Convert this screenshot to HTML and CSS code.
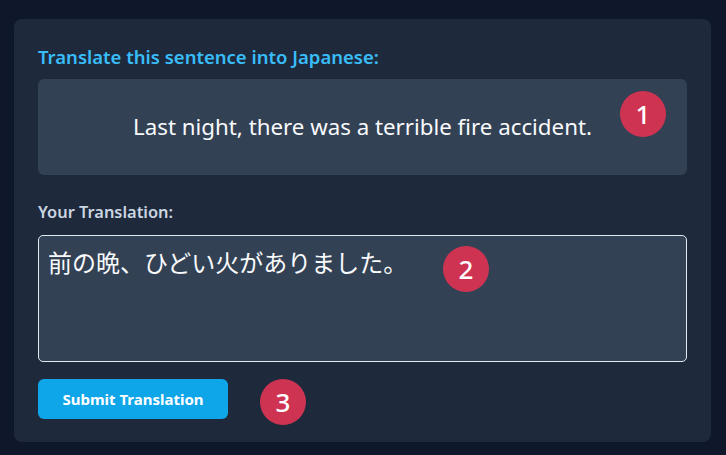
FILE: index.html
```html
<!DOCTYPE html>
<html lang="en">
<head>
<meta charset="utf-8">
<title>Translate</title>
<link rel="stylesheet" href="styles.css">
</head>
<body>
<main class="page">
  <section class="card">
    <h2 class="prompt-label">Translate this sentence into Japanese:</h2>
    <div class="sentence">Last night, there was a terrible fire accident.</div>
    <label class="answer-label" for="answer">Your Translation:</label>
    <textarea id="answer" class="answer">前の晩、ひどい火がありました。</textarea>
    <button class="submit" type="button">Submit Translation</button>
    <span class="badge badge-1">1</span>
    <span class="badge badge-2">2</span>
    <span class="badge badge-3">3</span>
  </section>
</main>
</body>
</html>
```

FILE: styles.css
```css
* { box-sizing: border-box; }
html, body {
  margin: 0;
  padding: 0;
  background: #0f172a;
  font-family: "Noto Sans", "Open Sans", "Noto Sans CJK JP", sans-serif;
}
.page {
  padding: 19px 15px 0 14px;
}
.card {
  position: relative;
  background: #1e293b;
  border-radius: 8px;
  padding: 24px 24px 23px 24px;
  display: flex;
  flex-direction: column;
  align-items: flex-start;
}
.prompt-label {
  margin: 0 0 8px 0;
  font-size: 18.5px;
  line-height: 28px;
  font-weight: 600;
  color: #38bdf8;
}
.sentence {
  align-self: stretch;
  background: #334155;
  border-radius: 6px;
  padding: 32px 24px;
  text-align: center;
  font-size: 22.3px;
  line-height: 32px;
  color: #f8fafc;
  margin-bottom: 25px;
}
.answer-label {
  font-size: 16.4px;
  line-height: 24px;
  font-weight: 600;
  color: #cbd5e1;
  margin-bottom: 11px;
}
.answer {
  align-self: stretch;
  height: 127px;
  background: #334155;
  border: 1px solid #e2e8f0;
  border-radius: 5px;
  padding: 10px 9px;
  font-family: "Noto Sans CJK JP", "Noto Sans", sans-serif;
  font-size: 24px;
  line-height: 32px;
  color: #f8fafc;
  resize: none;
  margin: 0 0 17px 0;
  outline: none;
}
.submit {
  width: 190px;
  height: 40px;
  border: none;
  border-radius: 6px;
  background: #0ea5e9;
  color: #ffffff;
  font-family: "Noto Sans", "Open Sans", sans-serif;
  font-size: 15px;
  font-weight: 700;
  padding: 0;
}
.badge {
  position: absolute;
  width: 46px;
  height: 46px;
  border-radius: 50%;
  background: #cf3352;
  color: #ffffff;
  font-size: 26px;
  font-weight: 500;
  line-height: 46px;
  text-align: center;
}
.badge-1 { left: 606px; top: 72px; }
.badge-2 { left: 429px; top: 227px; }
.badge-3 { left: 246px; top: 360px; }
```
